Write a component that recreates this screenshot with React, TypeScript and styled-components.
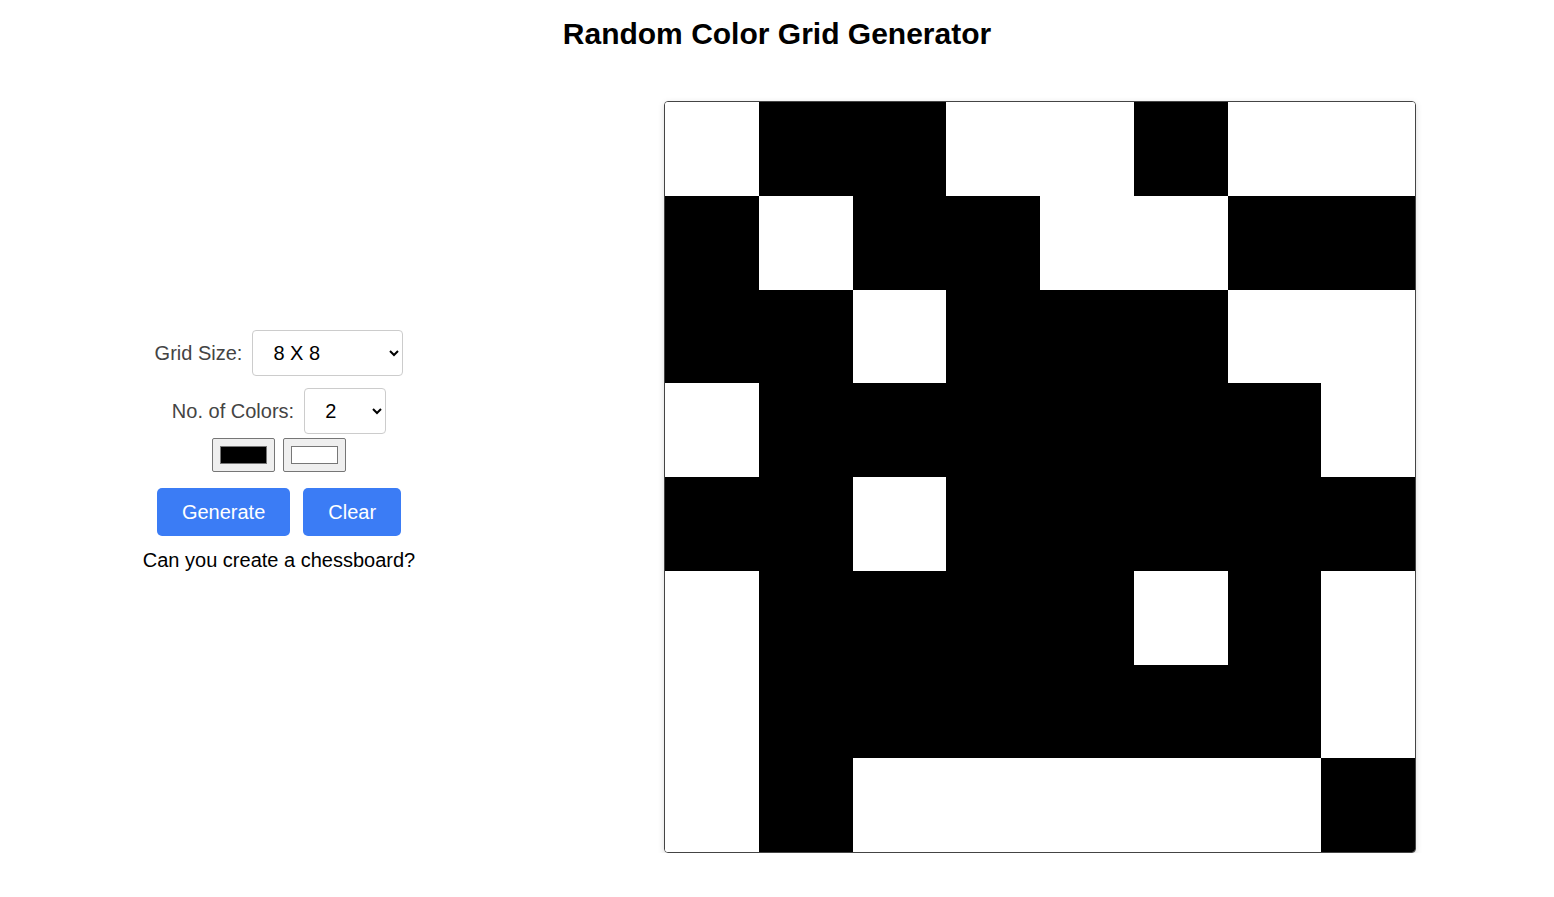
import {useState} from 'react';
import styled, {createGlobalStyle} from 'styled-components';

const GlobalStyle = createGlobalStyle`
  body {
    margin: 8px;
    font-family: "Liberation Sans", Arial, sans-serif;
    background: #fff;
  }
`;

const initialGrid = [
    'WBBWWBWW',
    'BWBBWWBB',
    'BBWBBBWW',
    'WBBBBBBW',
    'BBWBBBBB',
    'WBBBBWBW',
    'WBBBBBBW',
    'WBWWWWWB',
];

const App = () => {
    const [size, setSize] = useState(8);
    const [count, setCount] = useState(2);
    const [colors, setColors] = useState(['#000000', '#ffffff']);
    const [cells, setCells] = useState<string[]>(
        initialGrid.join('').split('').map(c => (c === 'B' ? '#000000' : '#ffffff'))
    );

    const generate = () => {
        const next: string[] = [];
        for (let i = 0; i < size * size; i++) {
            next.push(colors[Math.floor(Math.random() * count)]);
        }
        setCells(next);
    };

    const clear = () => setCells(Array(size * size).fill('#ffffff'));

    return <>
        <GlobalStyle/>
        <Title>Random Color Grid Generator</Title>
        <Layout>
            <Controls>
                <Field>
                    <Label>Grid Size:</Label>
                    <SizeSelect value={size} onChange={e => setSize(Number(e.target.value))}>
                        {[4, 6, 8, 10, 12].map(n => <option key={n} value={n}>{n} X {n}</option>)}
                    </SizeSelect>
                </Field>
                <Field>
                    <Label>No. of Colors:</Label>
                    <CountSelect value={count} onChange={e => setCount(Number(e.target.value))}>
                        {[2, 3, 4, 5].map(n => <option key={n} value={n}>{n}</option>)}
                    </CountSelect>
                </Field>
                <Swatches>
                    {colors.slice(0, count).map((c, i) => (
                        <ColorInput key={i} type="color" value={c}
                            onChange={e => {
                                const next = [...colors];
                                next[i] = e.target.value;
                                setColors(next);
                            }}/>
                    ))}
                </Swatches>
                <Buttons>
                    <Button type="button" onClick={generate}>Generate</Button>
                    <Button type="button" onClick={clear}>Clear</Button>
                </Buttons>
                <Hint>Can you create a chessboard?</Hint>
            </Controls>
            <Grid $size={size}>
                {cells.map((c, i) => <Cell key={i} style={{background: c}}/>)}
            </Grid>
        </Layout>
    </>;
};

export default App;



const Title = styled.h1`
  margin: 9px 0 0;
  text-align: center;
  font-size: 30px;
  font-weight: bold;
  color: #000;
`;

const Layout = styled.div`
  display: flex;
  align-items: flex-start;
  margin-top: 50px;
`;

const Controls = styled.div`
  width: 542px;
  margin-top: 229px;
  display: flex;
  flex-direction: column;
  align-items: center;
  gap: 12px;
`;

const Field = styled.div`
  display: flex;
  align-items: center;
  gap: 10px;
`;

const Label = styled.label`
  font-size: 20px;
  color: #444;
`;

const SelectBase = styled.select`
  height: 46px;
  padding: 0 8px 0 16px;
  font-family: "Liberation Sans", Arial, sans-serif;
  font-size: 20px;
  color: #000;
  background: #fff;
  border: 1px solid #ccc;
  border-radius: 4px;
`;

const SizeSelect = styled(SelectBase)`
  width: 151px;
`;

const CountSelect = styled(SelectBase)`
  width: 82px;
`;

const Swatches = styled.div`
  display: flex;
  gap: 8px;
  margin-top: -8px;
`;

const ColorInput = styled.input`
  width: 63px;
  height: 34px;
  padding: 3px 5px;
  border: 1px solid #767676;
  border-radius: 2px;
  background: #efefef;
`;

const Buttons = styled.div`
  display: flex;
  gap: 13px;
  margin-top: 4px;
`;

const Button = styled.button`
  height: 48px;
  padding: 0 25px;
  font-family: "Liberation Sans", Arial, sans-serif;
  font-size: 20px;
  color: #fff;
  background: #3b7cf5;
  border: none;
  border-radius: 5px;
  cursor: pointer;
`;

const Hint = styled.p`
  margin: 1px 0 0;
  font-size: 20px;
  color: #000;
`;

const Grid = styled.div<{ $size: number }>`
  margin-left: 114px;
  width: 750px;
  height: 750px;
  display: grid;
  grid-template-columns: repeat(${p => p.$size}, 1fr);
  grid-template-rows: repeat(${p => p.$size}, 1fr);
  border: 1px solid #444;
  border-radius: 4px;
  overflow: hidden;
  box-shadow: 0 2px 6px rgba(0, 0, 0, 0.15);
`;

const Cell = styled.div``;
